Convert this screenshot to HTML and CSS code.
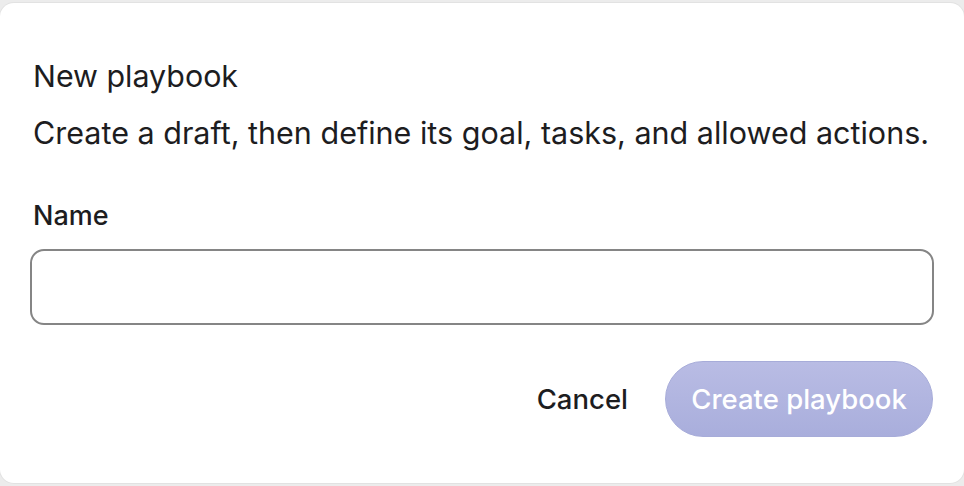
FILE: index.html
```html
<!DOCTYPE html>
<html lang="en">
<head>
<meta charset="utf-8">
<title>New playbook</title>
<link rel="stylesheet" href="styles.css">
</head>
<body>
<div class="dialog">
  <h1 class="title">New playbook</h1>
  <p class="desc">Create a draft, then define its goal, tasks, and allowed actions.</p>
  <label class="label" for="name">Name</label>
  <input class="input" id="name" type="text">
  <div class="actions">
    <button class="btn-cancel" type="button">Cancel</button>
    <button class="btn-create" type="button" disabled>Create playbook</button>
  </div>
</div>
</body>
</html>
```
FILE: styles.css
```css
html, body {
  margin: 0;
  padding: 0;
}
body {
  background: #ececec;
  font-family: Inter, "Noto Sans", sans-serif;
  color: #1d1d1f;
  height: 486px;
  overflow: hidden;
}
.dialog {
  box-sizing: border-box;
  margin-top: 3px;
  height: 480px;
  background: #fff;
  border-radius: 14px;
  box-shadow: 0 0 0 1px #e2e2e2;
  padding: 55px 30px 0 30px;
  display: flex;
  flex-direction: column;
}
.title {
  margin: 0 0 0 3px;
  font-size: 30.4px;
  line-height: 36px;
  font-weight: 400;
}
.desc {
  margin: 21px 0 0 3px;
  font-size: 30.5px;
  line-height: 36px;
  white-space: nowrap;
}
.label {
  margin: 50px 0 0 3px;
  font-size: 27px;
  line-height: 30px;
  font-weight: 450;
}
.input {
  box-sizing: border-box;
  margin-top: 18px;
  height: 76px;
  width: 100%;
  border: 2.5px solid #858585;
  border-radius: 14px;
  background: #fff;
  outline: none;
  font: inherit;
  font-size: 27px;
  padding: 0 16px;
}
.actions {
  margin-top: 36px;
  display: flex;
  justify-content: flex-end;
  align-items: center;
  gap: 37px;
}
.btn-cancel {
  background: none;
  border: none;
  padding: 0;
  font-family: inherit;
  font-size: 27.5px;
  font-weight: 450;
  color: #1d1d1f;
}
.btn-create {
  box-sizing: border-box;
  height: 76px;
  width: 268px;
  margin-right: 1px;
  border-radius: 38px;
  border: 1px solid #a7acd9;
  background: linear-gradient(#b9bce4, #a9aedc);
  color: #fff;
  font-family: inherit;
  font-size: 27.5px;
  font-weight: 450;
  padding: 0;
}
```
